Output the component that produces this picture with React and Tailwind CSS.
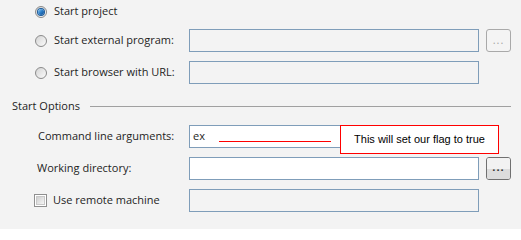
const font = { fontFamily: '"Open Sans", "Noto Sans", sans-serif' };

const Radio = ({ checked }) => (
  <span className="flex h-[12px] w-[12px] shrink-0 items-center justify-center rounded-full border border-[#8a8a8a] bg-gradient-to-br from-[#d4d4d4] to-[#fbfbfb]">
    {checked && (
      <span className="h-[6px] w-[6px] rounded-full bg-gradient-to-br from-[#8fd0f7] via-[#2d7fc9] to-[#0d4c93] ring-1 ring-[#1b5a9a]" />
    )}
  </span>
);

const Checkbox = () => (
  <span className="flex h-[13px] w-[13px] shrink-0 items-center justify-center border border-[#8f8f8f] bg-white">
    <span className="h-[9px] w-[9px] border border-[#c8c8c8] bg-gradient-to-br from-[#cfcfcf] to-[#f6f6f6]" />
  </span>
);

const Input = ({ enabled, children }) => (
  <div
    className={
      'flex h-[23px] w-[290px] shrink-0 items-center border border-[#7f9db9] px-[3px] text-[11px] text-[#1e1e1e] ' +
      (enabled ? 'bg-white' : 'bg-[#f3f3f3]')
    }
  >
    {children}
  </div>
);

const Browse = ({ enabled }) =>
  enabled ? (
    <div className="ml-[7px] flex h-[23px] w-[25px] flex-col overflow-hidden rounded-[3px] border border-[#707070]">
      <div className="h-1/2 bg-[#f2f2f2]" />
      <div className="h-1/2 bg-[#dddddd]" />
      <span className="-mt-[19px] text-center text-[11px] leading-[14px] font-bold tracking-[1px] text-[#333]">...</span>
    </div>
  ) : (
    <div className="ml-[7px] flex h-[23px] w-[25px] items-center justify-center rounded-[3px] border border-[#a9a9a9] bg-[#f4f4f4] text-[11px] tracking-[1px] text-[#a6a6a6]">
      ...
    </div>
  );

export default function App() {
  return (
    <div className="relative h-[229px] w-[521px] overflow-hidden bg-[#f3f3f3] text-[11px] text-[#1e1e1e]" style={font}>
      <div className="flex flex-col">
        <div className="flex h-[23px] items-center pl-[35px]">
          <Radio checked />
          <span className="ml-[7px]">Start project</span>
        </div>

        <div className="mt-[6px] flex h-[23px] items-center">
          <div className="flex w-[189px] items-center pl-[35px]">
            <Radio />
            <span className="ml-[7px]">Start external program:</span>
          </div>
          <Input />
          <Browse />
        </div>

        <div className="mt-[9px] flex h-[23px] items-center">
          <div className="flex w-[189px] items-center pl-[35px]">
            <Radio />
            <span className="ml-[7px]">Start browser with URL:</span>
          </div>
          <Input />
        </div>

        <div className="mt-[13px] flex h-[18px] items-center pl-[12px] pr-[10px]">
          <span>Start Options</span>
          <div className="ml-[10px] h-px flex-1 bg-[#a0a0a0]" />
        </div>

        <div className="mt-[10px] flex h-[23px] items-center">
          <div className="w-[189px] pl-[38px]">Command line arguments:</div>
          <Input enabled>ex</Input>
        </div>

        <div className="mt-[9px] flex h-[23px] items-center">
          <div className="w-[189px] pl-[37px]">Working directory:</div>
          <Input enabled />
          <Browse enabled />
        </div>

        <div className="mt-[9px] flex h-[23px] items-center">
          <div className="flex w-[189px] items-center pl-[34px]">
            <Checkbox />
            <span className="ml-[6px]">Use remote machine</span>
          </div>
          <Input />
        </div>
      </div>

      {/* callout */}
      <div className="absolute left-[219px] top-[141px] h-px w-[112px] bg-[#ff0000]" />
      <div
        className="absolute left-[340px] top-[125px] flex h-[29px] w-[159px] items-center justify-center border border-[#ff0000] bg-white text-[11px] text-black"
        style={{ fontFamily: '"Liberation Sans", Arial, sans-serif' }}
      >
        This will set our flag to true
      </div>
    </div>
  );
}
